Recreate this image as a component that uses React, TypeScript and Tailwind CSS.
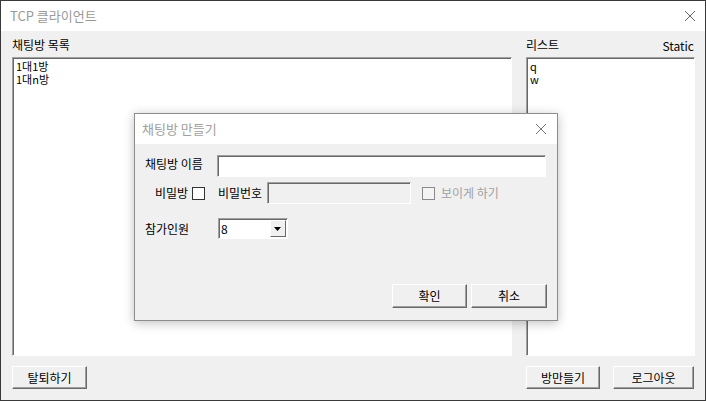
const font = { fontFamily: '"Noto Sans CJK KR", "Noto Sans", sans-serif' };

function CloseX({ className }: { className?: string }) {
  return (
    <svg width="12" height="12" viewBox="0 0 12 12" className={className}>
      <path d="M1 1 L11 11 M11 1 L1 11" stroke="currentColor" strokeWidth="1" />
    </svg>
  );
}

function Btn({ label, className }: { label: string; className: string }) {
  return (
    <div
      className={`flex items-center justify-center bg-[#f0f0f0] border border-t-white border-l-white border-b-[#696969] border-r-[#696969] shadow-[inset_-1px_-1px_0_#a0a0a0] text-[12px] text-black ${className}`}
    >
      {label}
    </div>
  );
}

function Sunken({ className, children }: { className: string; children?: React.ReactNode }) {
  return (
    <div
      className={`border border-t-[#a0a0a0] border-l-[#a0a0a0] border-b-white border-r-white shadow-[inset_1px_1px_0_#696969] ${className}`}
    >
      {children}
    </div>
  );
}

function Check({ disabled }: { disabled?: boolean }) {
  return (
    <div
      className={`w-[13px] h-[13px] border ${disabled ? 'border-[#8a8a8a] bg-[#f4f4f4]' : 'border-[#333] bg-white'}`}
    />
  );
}

function Dialog() {
  return (
    <div className="absolute left-[133px] top-[112px] w-[424px] h-[208px] border border-[#8c8c8c] bg-[#f0f0f0] shadow-[0_2px_10px_rgba(0,0,0,0.25)] flex flex-col">
      <div className="h-[30px] bg-white flex items-center justify-between pl-[7px] pr-[10px]">
        <span className="text-[13px] text-[#a0a0a0]">채팅방 만들기</span>
        <CloseX className="text-[#777]" />
      </div>
      <div className="flex flex-col pl-[10px] pr-[10px] pt-[11px]">
        <div className="flex items-center h-[22px]">
          <span className="w-[72px] text-[12px] -mt-[4px]">채팅방 이름</span>
          <Sunken className="w-[329px] h-[22px] bg-white" />
        </div>
        <div className="flex items-center h-[22px] mt-[5px]">
          <span className="ml-[10px] w-[37px] text-[12px]">비밀방</span>
          <Check />
          <span className="ml-[13px] w-[49px] text-[12px]">비밀번호</span>
          <Sunken className="w-[144px] h-[22px] bg-[#f0f0f0]" />
          <div className="ml-[11px] mt-[1px]">
            <Check disabled />
          </div>
          <span className="ml-[6px] text-[12px] text-[#a0a0a0]">보이게 하기</span>
        </div>
        <div className="flex items-center h-[21px] mt-[14px]">
          <span className="w-[73px] text-[12px]">참가인원</span>
          <Sunken className="w-[70px] h-[21px] bg-white flex items-center justify-between pl-[2px] pr-[1px]">
            <span className="text-[12px]">8</span>
            <div className="w-[16px] h-[17px] bg-[#f0f0f0] border border-t-white border-l-white border-b-[#696969] border-r-[#696969] flex items-center justify-center">
              <svg width="8" height="4" viewBox="0 0 8 4">
                <path d="M0 0 H7 L3.5 4 Z" fill="#000" />
              </svg>
            </div>
          </Sunken>
        </div>
        <div className="flex justify-end gap-[4px] mt-[45px]">
          <Btn label="확인" className="w-[75px] h-[24px]" />
          <Btn label="취소" className="w-[76px] h-[24px]" />
        </div>
      </div>
    </div>
  );
}

export default function App() {
  return (
    <div style={font} className="relative w-[706px] h-[401px] border border-[#3a3a3a] bg-[#f0f0f0] text-black flex flex-col overflow-hidden">
      <div className="h-[30px] bg-white flex items-center justify-between pl-[9px] pr-[9px] shrink-0">
        <span className="text-[13px] text-[#9a9a9a]">TCP 클라이언트</span>
        <CloseX className="text-[#666]" />
      </div>
      <div className="flex pl-[11px] pr-[10px] pt-[6px] gap-[14px]">
        <div className="flex flex-col w-[500px]">
          <span className="h-[20px] text-[12px] leading-[16px]">채팅방 목록</span>
          <Sunken className="h-[299px] bg-white pl-[3px] pt-[2px] text-[11px] leading-[13px]">
            <div className="h-[13px]">1대1방</div>
            <div className="h-[13px]">1대n방</div>
          </Sunken>
        </div>
        <div className="flex flex-col w-[169px]">
          <div className="h-[20px] flex justify-between items-start">
            <span className="text-[12px] leading-[16px]">리스트</span>
            <span className="text-[12px] leading-[16px] mt-[1px] mr-[1px]">Static</span>
          </div>
          <Sunken className="h-[299px] bg-white pl-[3px] pt-[2px] text-[11px] leading-[13px]">
            <div className="h-[13px]">q</div>
            <div className="h-[13px]">w</div>
          </Sunken>
        </div>
      </div>
      <div className="flex pl-[11px] pr-[11px] mt-[10px]">
        <Btn label="탈퇴하기" className="w-[75px] h-[23px]" />
        <div className="flex-1" />
        <Btn label="방만들기" className="w-[74px] h-[23px]" />
        <Btn label="로그아웃" className="w-[81px] h-[23px] ml-[13px]" />
      </div>
      <Dialog />
    </div>
  );
}
